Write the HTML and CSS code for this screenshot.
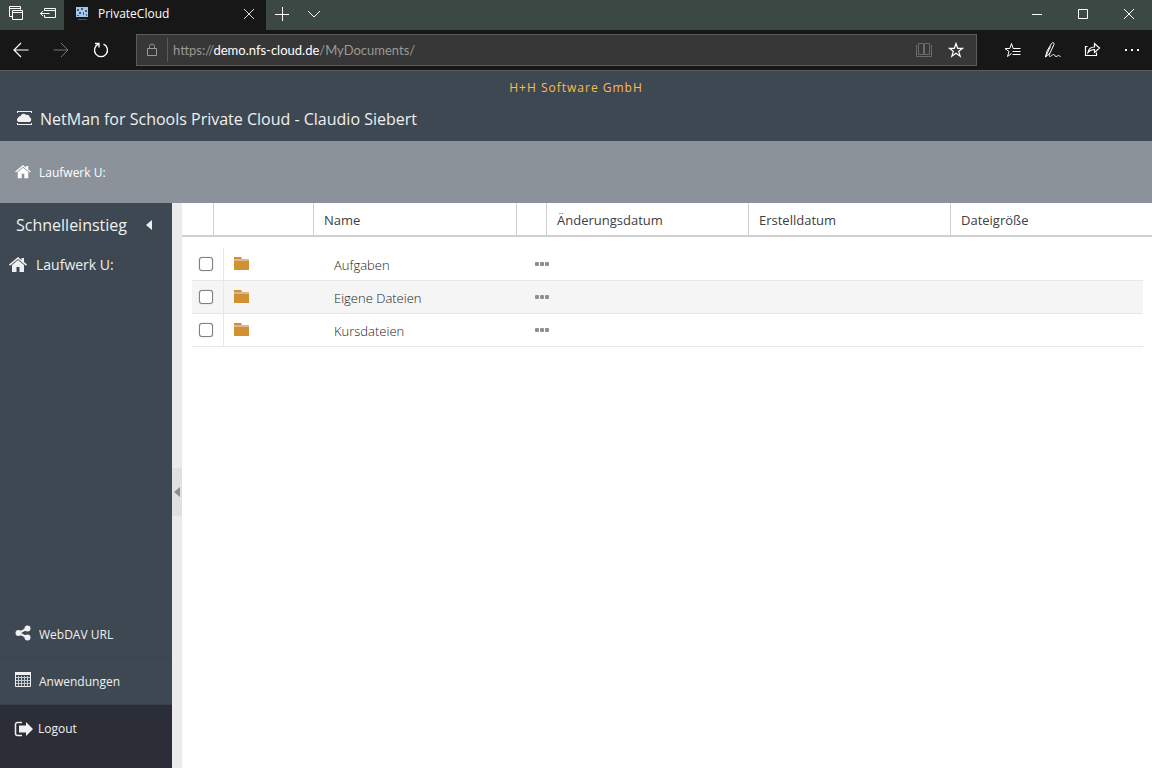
FILE: index.html
```
<!DOCTYPE html>
<html lang="de">
<head>
    <meta charset="UTF-8">
    <meta name="viewport" content="width=device-width, initial-scale=1.0">
    <title>PrivateCloud</title>
    <link rel="stylesheet" href="styles.css">
</head>
<body>
    <!-- Browser -->
    <div class="tab-bar">
        <button class="tab-tool" aria-label="Tabs">
            <svg width="16" height="16" viewBox="0 0 16 16" fill="none" stroke="#fff"><path d="M4.500 10.500h-3v-10h11v3M1.500 2.500h11M4.500 4.500h10v9h-10zM4.500 6.500h10"/></svg>
        </button>
        <button class="tab-tool" aria-label="Tabs beiseitelegen">
            <svg width="18" height="16" viewBox="0 0 18 16" fill="none" stroke="#fff"><path d="M5.500 5V2.500h11v9h-11V9M5.500 4.500h11M1.500 7.500h9M4 5L1.500 7.500 4 10"/></svg>
        </button>
        <div class="tab">
            <svg width="14" height="14" viewBox="0 0 14 14"><path fill="#a9c8e6" d="M1 0h12v10H1z"/><path fill="#2d5f99" d="M2 2h2v2H2zM6 1h2v2H6zM10 3h2v2h-2zM4 5h2v2H4zM8 5h1v3H8zM2 8h2v1H2zM11 7h1v2h-1z"/><path fill="#555" d="M3 12h9v1H3z"/></svg>
            <span class="tab-title">PrivateCloud</span>
            <button class="tab-close" aria-label="Tab schließen">
                <svg width="12" height="12" viewBox="0 0 12 12" stroke="#ddd"><path d="M1 1l10 10M11 1L1 11"/></svg>
            </button>
        </div>
        <button class="tab-tool" aria-label="Neuer Tab">
            <svg width="14" height="14" viewBox="0 0 14 14" stroke="#fff"><path d="M7.500 0v14M0 7.500h14"/></svg>
        </button>
        <button class="tab-tool" aria-label="Tabvorschau">
            <svg width="14" height="14" viewBox="0 0 14 14" fill="none" stroke="#fff"><path d="M1 4l6 6 6-6"/></svg>
        </button>
        <div class="window-buttons">
            <button aria-label="Minimieren"><svg width="12" height="12" viewBox="0 0 12 12" stroke="#fff"><path d="M1 6.500h10"/></svg></button>
            <button aria-label="Maximieren"><svg width="12" height="12" viewBox="0 0 12 12" fill="none" stroke="#fff"><path d="M1.500 1.500h9v9h-9z"/></svg></button>
            <button aria-label="Schließen"><svg width="12" height="12" viewBox="0 0 12 12" stroke="#fff"><path d="M1 1l10 10M11 1L1 11"/></svg></button>
        </div>
    </div>

    <div class="nav-bar">
        <button class="nav-button" aria-label="Zurück">
            <svg width="16" height="16" viewBox="0 0 16 16" fill="none" stroke="#fff" stroke-width="1.200"><path d="M15.500 8H1M8 1L1 8l7 7"/></svg>
        </button>
        <button class="nav-button" aria-label="Vorwärts">
            <svg width="16" height="16" viewBox="0 0 16 16" fill="none" stroke="#777"><path d="M.5 8H15M8 1l7 7-7 7"/></svg>
        </button>
        <button class="nav-button" aria-label="Aktualisieren">
            <svg width="16" height="16" viewBox="0 0 16 16" fill="none" stroke="#fff" stroke-width="1.300"><path d="M5.500 2.200a6.500 6.500 0 1 0 5 0M2 1.500h4v4"/></svg>
        </button>
        <div class="address">
            <svg class="lock" width="12" height="14" viewBox="0 0 12 14" fill="none" stroke="#999"><path d="M1.500 5.500h9v7h-9zM3.500 5.500V3.500a2.500 2.500 0 0 1 5 0v2"/></svg>
            <a class="url" href="#">https://<b>demo.nfs-cloud.de</b>/MyDocuments/</a>
            <button class="address-button" aria-label="Leseansicht">
                <svg width="16" height="16" viewBox="0 0 16 16" fill="none" stroke="#6c6c6c"><path d="M2.500 1.500h5v11h-5zM8.500 1.500h5v11h-5zM.5 3v11.500h15V3"/></svg>
            </button>
            <button class="address-button" aria-label="Favorit">
                <svg width="16" height="16" viewBox="0 0 16 16" fill="none" stroke="#fff" stroke-width="1.200"><path d="M8 1.500l1.700 4.800h5l-4 3 1.500 5L8 11.300l-4.200 3 1.500-5-4-3h5z"/></svg>
            </button>
        </div>
        <button class="nav-button" aria-label="Hub">
            <svg width="17" height="16" viewBox="0 0 17 16" fill="none" stroke="#fff"><path d="M11.500 6.500H9.200L7.500 1.500 5.800 6.500H1l4 3-1.500 5 4-3M10 6.500h6.500M8.500 9.500h8M8.500 12.500h8"/></svg>
        </button>
        <button class="nav-button" aria-label="Notiz">
            <svg width="17" height="16" viewBox="0 0 17 16" fill="none" stroke="#fff"><path d="M1.500 15L3 9l4.500-7.500c1-1.500 3-1 2.500 1L6 11l-4.500 4L6.500 4.500M6 11c-1 2-1 3.500 0 3.500s2-2 3.500-2 1 2 2.500 2 1.500-1 2.500-1 1 1 2 1"/></svg>
        </button>
        <button class="nav-button" aria-label="Teilen">
            <svg width="17" height="16" viewBox="0 0 17 16" fill="none" stroke="#fff" stroke-width="1.200"><path d="M3.500 4.500h-2v9h11v-3M4 10.500c.5-4 3-5.500 6.500-5.500V1.500L15.500 6l-5 4.500V7.500C7.500 7.500 5.500 8.500 4 10.500z"/></svg>
        </button>
        <button class="nav-button" aria-label="Mehr">
            <svg width="16" height="16" viewBox="0 0 16 16" fill="#fff"><path d="M1 7h2v2H1zM7 7h2v2H7zM13 7h2v2h-2z"/></svg>
        </button>
    </div>

    <!-- Anwendung -->
    <header class="app-header">
        <p class="company">H+H Software GmbH</p>
        <h1>
            <svg width="16" height="18" viewBox="0 0 16 18" fill="#f0f0f0"><path d="M1 1h15v2h-1V2H2v1H1zM1 13h1v1h13v-1h1v2H1z"/><path d="M3 12a2.200 2.200 0 0 1-.8-4.200C2.300 6.500 3.500 6 4.500 6.300 5 3.500 8.500 3 10 5c2-.8 3.700.6 3.700 2.300C16 8 15.500 12 13.500 12z"/></svg>
            NetMan for Schools Private Cloud - Claudio Siebert
        </h1>
    </header>

    <nav class="breadcrumb">
        <a href="#">
            <svg width="16" height="14" viewBox="0 0 18 16" fill="#fff"><path d="M9 3l6 5v7h-4.500v-5h-3v5H3V8z"/><path d="M9 0L0 7.500l1 1.200L9 2l8 6.700 1-1.200-3-2.500V1h-2.500v2z"/></svg>
            Laufwerk U:
        </a>
    </nav>

    <div class="workspace">
        <aside class="sidebar">
            <div class="sidebar-title">
                <h2>Schnelleinstieg</h2>
                <button aria-label="Einklappen"><svg width="6" height="10" viewBox="0 0 6 10" fill="#f0f0f0"><path d="M6 0v10L0 5z"/></svg></button>
            </div>
            <a class="drive" href="#">
                <svg width="18" height="16" viewBox="0 0 18 16" fill="#f0f0f0"><path d="M9 3l6 5v7h-4.500v-5h-3v5H3V8z"/><path d="M9 0L0 7.500l1 1.200L9 2l8 6.700 1-1.200-3-2.500V1h-2.500v2z"/></svg>
                Laufwerk U:
            </a>
            <div class="sidebar-menu">
                <a href="#">
                    <svg width="16" height="18" viewBox="0 0 16 18" fill="#f0f0f0"><circle cx="3.500" cy="8" r="3"/><circle cx="12.500" cy="3.500" r="3"/><circle cx="12.500" cy="12.500" r="3"/><path d="M12.500 3.500L3.500 8l9 4.500" fill="none" stroke="#f0f0f0" stroke-width="2"/></svg>
                    WebDAV URL
                </a>
                <a href="#">
                    <svg width="16" height="18" viewBox="0 0 16 18" fill="none" stroke="#f0f0f0"><path d="M.5 .5h15v14H.5z"/><path d="M0 1.500h16" stroke-width="3"/><path d="M3.500 4v10M6.500 4v10M9.500 4v10M12.500 4v10M1 5.500h14M1 8.500h14M1 11.500h14" stroke="#c5c9cc"/></svg>
                    Anwendungen
                </a>
                <a class="logout" href="#">
                    <svg width="19" height="16" viewBox="0 0 19 16"><path d="M8 1.500H3.500a2 2 0 0 0-2 2v9a2 2 0 0 0 2 2H8" fill="none" stroke="#f0f0f0" stroke-width="1.500"/><path fill="#f0f0f0" d="M5 4.500h7V1l7 7-7 7v-3.500H5z"/></svg>
                    Logout
                </a>
            </div>
        </aside>

        <div class="splitter">
            <button aria-label="Seitenleiste ausblenden"><svg width="6" height="10" viewBox="0 0 6 10" fill="#8c8c8c"><path d="M6 0v10L0 5z"/></svg></button>
        </div>

        <main>
            <table class="files">
                <thead>
                    <tr>
                        <th></th>
                        <th></th>
                        <th>Name</th>
                        <th></th>
                        <th>Änderungsdatum</th>
                        <th>Erstelldatum</th>
                        <th>Dateigröße</th>
                    </tr>
                </thead>
                <tbody>
                    <tr>
                        <td class="check"><input type="checkbox" id="aufgaben"></td>
                        <td class="icon"><svg width="15" height="13" viewBox="0 0 15 13"><path fill="#cf9132" d="M0 0h7l1 2H0zM0 4h15v9H0z"/><path fill="#dcb592" d="M0 2h15v2H0z"/></svg></td>
                        <td class="name"><label for="aufgaben">Aufgaben</label></td>
                        <td class="more"><button aria-label="Aktionen"><svg width="15" height="4" viewBox="0 0 15 4" fill="#8c9094"><rect width="4" height="4" rx="1"/><rect x="5" width="4" height="4" rx="1"/><rect x="10" width="4" height="4" rx="1"/></svg></button></td>
                        <td></td>
                        <td></td>
                        <td></td>
                    </tr>
                    <tr>
                        <td class="check"><input type="checkbox" id="eigene-dateien"></td>
                        <td class="icon"><svg width="15" height="13" viewBox="0 0 15 13"><path fill="#cf9132" d="M0 0h7l1 2H0zM0 4h15v9H0z"/><path fill="#dcb592" d="M0 2h15v2H0z"/></svg></td>
                        <td class="name"><label for="eigene-dateien">Eigene Dateien</label></td>
                        <td class="more"><button aria-label="Aktionen"><svg width="15" height="4" viewBox="0 0 15 4" fill="#8c9094"><rect width="4" height="4" rx="1"/><rect x="5" width="4" height="4" rx="1"/><rect x="10" width="4" height="4" rx="1"/></svg></button></td>
                        <td></td>
                        <td></td>
                        <td></td>
                    </tr>
                    <tr>
                        <td class="check"><input type="checkbox" id="kursdateien"></td>
                        <td class="icon"><svg width="15" height="13" viewBox="0 0 15 13"><path fill="#cf9132" d="M0 0h7l1 2H0zM0 4h15v9H0z"/><path fill="#dcb592" d="M0 2h15v2H0z"/></svg></td>
                        <td class="name"><label for="kursdateien">Kursdateien</label></td>
                        <td class="more"><button aria-label="Aktionen"><svg width="15" height="4" viewBox="0 0 15 4" fill="#8c9094"><rect width="4" height="4" rx="1"/><rect x="5" width="4" height="4" rx="1"/><rect x="10" width="4" height="4" rx="1"/></svg></button></td>
                        <td></td>
                        <td></td>
                        <td></td>
                    </tr>
                </tbody>
            </table>
        </main>
    </div>
</body>
</html>
```
FILE: styles.css
```
* {
    margin: 0;
    padding: 0;
    box-sizing: border-box;
}

body {
    font-family: 'Open Sans', sans-serif;
    font-size: 13px;
    color: #404040;
    background-color: white;
    display: flex;
    flex-direction: column;
    height: 100vh;
}

button {
    display: flex;
    align-items: center;
    justify-content: center;
    background: none;
    border: none;
    cursor: pointer;
}

a {
    color: inherit;
    text-decoration: none;
}

svg {
    display: block;
    flex-shrink: 0;
}

/* Browser */
.tab-bar {
    display: flex;
    background-color: #3b4843;
    color: white;
    font-size: 12px;
}

.tab-tool {
    width: 32px;
    height: 28px;
}

.tab {
    display: flex;
    align-items: center;
    width: 202px;
    height: 30px;
    padding: 0 11px 3px;
    background-color: #171717;
}

.tab-title {
    flex: 1;
    margin-left: 9px;
}

.window-buttons {
    display: flex;
    margin-left: auto;
}

.window-buttons button {
    width: 46px;
    height: 28px;
}

.nav-bar {
    display: flex;
    align-items: center;
    height: 41px;
    padding-left: 1px;
    background-color: #171717;
    border-bottom: 1px solid #5c5c5c;
}

.nav-button {
    width: 40px;
    height: 40px;
}

.address {
    flex: 1;
    display: flex;
    align-items: center;
    height: 32px;
    margin: 0 15px;
    background-color: #373737;
    border: 1px solid #5c5c5c;
    font-family: Lato, sans-serif;
    font-size: 13px;
    color: #999;
}

.lock {
    margin: 0 9px;
}

.url {
    flex: 1;
    padding-left: 5px;
    line-height: 24px;
    border-left: 1px solid #5c5c5c;
}

.url b {
    color: white;
    font-weight: normal;
}

.address-button {
    width: 32px;
    height: 30px;
}

.address-button:last-child {
    margin-right: 4px;
}

/* Kopfbereich */
.app-header {
    height: 70px;
    padding: 8px 16px;
    background-color: #3d4853;
    color: #f0f0f0;
}

.company {
    color: #fbbc48;
    font-size: 12px;
    line-height: 18px;
    letter-spacing: 1px;
    text-align: center;
}

h1 {
    display: flex;
    align-items: center;
    gap: 8px;
    margin-top: 10px;
    font-size: 16px;
    font-weight: normal;
    line-height: 24px;
}

.breadcrumb {
    display: flex;
    align-items: center;
    height: 62px;
    padding: 0 15px;
    background-color: #8b9299;
    color: white;
    font-size: 12px;
}

.breadcrumb a {
    display: flex;
    align-items: center;
    gap: 8px;
}

.workspace {
    flex: 1;
    display: flex;
    min-height: 0;
}

/* Seitenleiste */
.sidebar {
    display: flex;
    flex-direction: column;
    width: 172px;
    background-color: #3d4853;
    color: #f0f0f0;
}

.sidebar-title {
    display: flex;
    align-items: center;
    justify-content: space-between;
    height: 44px;
    padding: 0 20px 0 16px;
}

h2 {
    font-size: 16px;
    font-weight: normal;
}

.drive {
    display: flex;
    align-items: center;
    gap: 9px;
    height: 35px;
    padding: 0 9px;
    font-size: 14px;
}

.sidebar-menu {
    margin-top: auto;
    font-size: 12px;
}

.sidebar-menu a {
    display: flex;
    align-items: center;
    gap: 8px;
    height: 47px;
    padding: 0 15px;
    border-bottom: 1px solid #39434d;
}

.sidebar-menu .logout {
    gap: 5px;
    height: 63px;
    padding: 0 14px 16px;
    border-bottom: none;
    background-color: #2b2e37;
}

.splitter {
    display: flex;
    align-items: center;
    width: 10px;
    padding-top: 12px;
    background-color: #ebebeb;
}

.splitter button {
    width: 10px;
    height: 48px;
    background-color: #e0e0e0;
}

/* Dateiliste */
main {
    flex: 1;
    min-width: 0;
}

.files,
.files thead,
.files tbody {
    display: block;
}

.files tr {
    display: grid;
    grid-template-columns: 32px 100px 203px 30px 202px 202px 1fr;
}

.files thead {
    border-bottom: 2px solid #d0d0d0;
}

.files th {
    height: 32px;
    padding: 0 10px;
    border-right: 1px solid #d0d0d0;
    font-weight: normal;
    line-height: 34px;
    text-align: left;
}

.files th:last-child {
    border-right: none;
}

.files tbody {
    padding: 11px 9px 0 10px;
}

.files tbody tr {
    height: 33px;
    border-bottom: 1px solid #e7e7e7;
}

.files tbody tr:nth-child(even) {
    background-color: #f5f5f5;
}

.files td {
    display: flex;
    align-items: center;
}

.files .check {
    justify-content: center;
    padding-right: 3px;
    border-right: 1px solid #e7e7e7;
}

.check input {
    appearance: none;
    width: 14px;
    height: 14px;
    border: 1px solid #808080;
    border-radius: 3px;
    background-color: white;
    box-shadow: 0 0 1px #808080;
}

.files .icon {
    padding: 0 0 1px 10px;
}

.files .name {
    padding: 2px 10px 0;
    color: #1c1c1c;
    font-weight: 300;
}

.files .more {
    justify-content: center;
}
```
